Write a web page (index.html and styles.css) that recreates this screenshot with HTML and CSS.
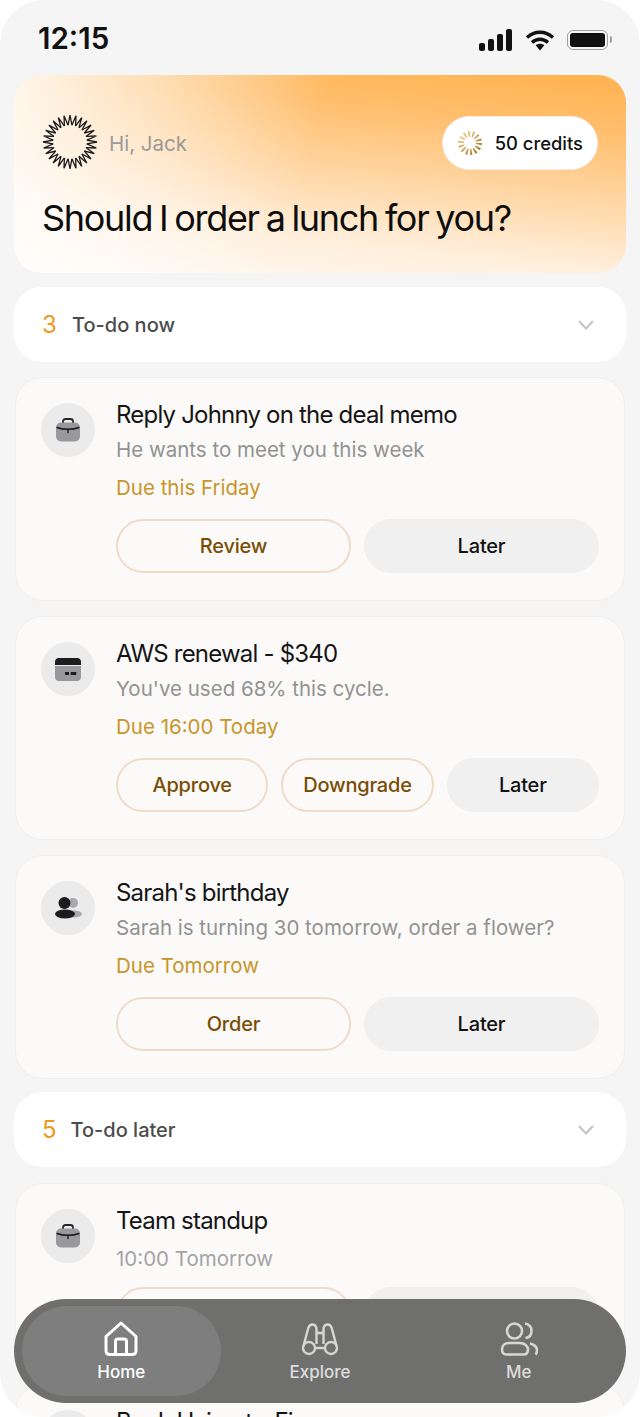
FILE: index.html
```html
<!DOCTYPE html>
<html>
    <head>
        <meta charset="utf-8">
        <title>To-do</title>
        <link rel="stylesheet" href="styles.css">
    </head>
    <body>
        <div class="phone">
            <svg width="0" height="0" class="defs">
                <defs>
                    <!-- briefcase, used twice -->
                    <symbol id="case" viewBox="0 0 24 24">
                        <path d="M7 6V3.500C7 2 8 1 9.500 1h5C16 1 17 2 17 3.500V6" fill="none" stroke="#26262a" stroke-width="1.800"/>
                        <rect x="0" y="4.500" width="24" height="19" rx="5" fill="#98989d"/>
                        <path d="M1 9.500c6 2.400 16 2.400 22 0M12 11v3.500" fill="none" stroke="#1c1c1e" stroke-width="1.400" stroke-linecap="round"/>
                    </symbol>
                </defs>
            </svg>

            <div class="status">
                <span class="time">12:15</span>
                <div class="status_icons">
                    <svg width="34" height="22" viewBox="0 0 34 22">
                        <rect x="0" y="14" width="6" height="8" rx="2"/>
                        <rect x="9" y="10" width="6" height="12" rx="2"/>
                        <rect x="18" y="5" width="6" height="17" rx="2"/>
                        <rect x="27" y="0" width="6" height="22" rx="2"/>
                    </svg>
                    <svg width="30" height="22" viewBox="0 0 30 22">
                        <path d="M2 8.500C9.500 1.500 20.500 1.500 28 8.500M7 13.500c4.800-4.300 11.200-4.300 16 0" fill="none" stroke="#111" stroke-width="3.400"/>
                        <path d="M10.700 16.200c2.500-2 6.100-2 8.600 0L15 21.500z" fill="#111"/>
                    </svg>
                    <div class="battery"><div class="battery_fill"></div></div>
                </div>
            </div>

            <div class="hero">
                <div class="hero_top">
                    <div class="greeting">
                        <svg class="logo" width="56" height="56" viewBox="-28 -28 56 56" fill="none" stroke="#1b1b1b" stroke-width="1.300">
                            <defs>
                                <path id="zig" d="M-1.900 -16.800L0 -27L1.900 -16.800"/>
                                <g id="quarter">
                                    <use href="#zig"/>
                                    <use href="#zig" transform="rotate(12.857)"/>
                                    <use href="#zig" transform="rotate(25.714)"/>
                                    <use href="#zig" transform="rotate(38.571)"/>
                                    <use href="#zig" transform="rotate(51.429)"/>
                                    <use href="#zig" transform="rotate(64.286)"/>
                                    <use href="#zig" transform="rotate(77.143)"/>
                                </g>
                            </defs>
                            <use href="#quarter"/>
                            <use href="#quarter" transform="rotate(90)"/>
                            <use href="#quarter" transform="rotate(180)"/>
                            <use href="#quarter" transform="rotate(270)"/>
                        </svg>
                        <span class="hi">Hi, Jack</span>
                    </div>
                    <div class="credits">
                        <svg width="26" height="26" viewBox="0 0 26 26">
                            <defs>
                                <linearGradient id="gold" x1="0" y1="0" x2="1" y2="1">
                                    <stop offset="0" stop-color="#f0d08a"/>
                                    <stop offset="1" stop-color="#a8741c"/>
                                </linearGradient>
                            </defs>
                            <circle cx="13" cy="13" r="9" fill="none" stroke="url(#gold)" stroke-width="6" stroke-dasharray="1.700 2.340"/>
                        </svg>
                        <span>50 credits</span>
                    </div>
                </div>
                <h1 class="question">Should I order a lunch for you?</h1>
            </div>

            <div class="section">
                <span class="count">3</span>
                <span class="section_name">To-do now</span>
                <svg class="chevron" width="18" height="12" viewBox="0 0 18 12"><path d="M2 2l7 7.500L16 2" fill="none" stroke="#c4c4c4" stroke-width="2"/></svg>
            </div>

            <div class="card">
                <div class="badge"><svg width="24" height="24"><use href="#case"/></svg></div>
                <div class="card_body">
                    <div class="title">Reply Johnny on the deal memo</div>
                    <div class="sub">He wants to meet you this week</div>
                    <div class="due">Due this Friday</div>
                    <div class="actions">
                        <div class="btn outline">Review</div>
                        <div class="btn plain">Later</div>
                    </div>
                </div>
            </div>

            <div class="card">
                <div class="badge">
                    <svg width="26" height="24" viewBox="0 0 26 24">
                        <path d="M0 8V5C0 2.500 1.500 1 4 1h18c2.500 0 4 1.500 4 4v3z" fill="#1c1c1e"/>
                        <path d="M0 9h26v11c0 2.500-1.500 4-4 4H4c-2.500 0-4-1.500-4-4z" fill="#98989d"/>
                        <rect x="10" y="15" width="4" height="3" fill="#1c1c1e"/>
                        <rect x="15.700" y="15" width="5.600" height="3" fill="#1c1c1e"/>
                    </svg>
                </div>
                <div class="card_body">
                    <div class="title">AWS renewal - $340</div>
                    <div class="sub">You've used 68% this cycle.</div>
                    <div class="due">Due 16:00 Today</div>
                    <div class="actions">
                        <div class="btn outline">Approve</div>
                        <div class="btn outline">Downgrade</div>
                        <div class="btn plain">Later</div>
                    </div>
                </div>
            </div>

            <div class="card">
                <div class="badge">
                    <svg width="30" height="28" viewBox="0 0 30 28">
                        <circle cx="20" cy="9" r="5" fill="#a9a9ad"/>
                        <ellipse cx="21" cy="20" rx="8" ry="3.500" fill="#a9a9ad"/>
                        <circle cx="11.500" cy="9" r="6" fill="#1c1c1e"/>
                        <ellipse cx="12" cy="20" rx="10" ry="4.500" fill="#1c1c1e"/>
                    </svg>
                </div>
                <div class="card_body">
                    <div class="title">Sarah's birthday</div>
                    <div class="sub">Sarah is turning 30 tomorrow, order a flower?</div>
                    <div class="due">Due Tomorrow</div>
                    <div class="actions">
                        <div class="btn outline">Order</div>
                        <div class="btn plain">Later</div>
                    </div>
                </div>
            </div>

            <div class="section later">
                <span class="count">5</span>
                <span class="section_name">To-do later</span>
                <svg class="chevron" width="18" height="12" viewBox="0 0 18 12"><path d="M2 2l7 7.500L16 2" fill="none" stroke="#c4c4c4" stroke-width="2"/></svg>
            </div>

            <div class="card short">
                <div class="badge"><svg width="24" height="24"><use href="#case"/></svg></div>
                <div class="card_body">
                    <div class="title">Team standup</div>
                    <div class="sub">10:00 Tomorrow</div>
                    <div class="actions">
                        <div class="btn outline">Join</div>
                        <div class="btn plain">Later</div>
                    </div>
                </div>
            </div>

            <div class="card">
                <div class="badge"></div>
                <div class="card_body">
                    <div class="title">Book Haircut - Fi</div>
                </div>
            </div>

            <!-- floats over the list -->
            <div class="nav">
                <div class="tab active">
                    <svg width="38" height="38" viewBox="0 0 38 38" fill="none" stroke="#fff" stroke-width="3" stroke-linejoin="round">
                        <path d="M19 3L34 16.500V30.500c0 2.500-1.500 4-4 4H8c-2.500 0-4-1.500-4-4V16.500z"/>
                        <path d="M13.500 34.500V21.500c0-1.500 1-2.500 2.500-2.500h6c1.500 0 2.500 1 2.500 2.500v13"/>
                    </svg>
                    <span>Home</span>
                </div>
                <div class="tab">
                    <svg width="38" height="38" viewBox="0 0 38 38" fill="none" stroke="#d6d6d6" stroke-width="2.400">
                        <circle cx="8" cy="28" r="6"/>
                        <circle cx="30" cy="28" r="6"/>
                        <path d="M2.500 26L7 9c.8-3 2.500-4.500 4.500-4.500S15 6 15.500 8.500V24M35.500 26L31 9c-.8-3-2.500-4.500-4.500-4.500S23 6 22.500 8.500V24"/>
                        <path d="M15.500 13h7M14 28h10"/>
                    </svg>
                    <span>Explore</span>
                </div>
                <div class="tab">
                    <svg width="38" height="38" viewBox="0 0 38 38" fill="none" stroke="#d6d6d6" stroke-width="2.600">
                        <circle cx="14.500" cy="11" r="7.500"/>
                        <path d="M9 23h11c4.500 0 8 3 8 6.500 0 3-1.500 5-4.500 5h-17c-3 0-4.500-2-4.500-5C2 26 4.500 23 9 23z"/>
                        <path d="M25 3.500c4 .5 6.500 3.500 6.500 7.500s-2.500 6.500-6 7M30 23.500c4 1 7 3.500 7 7 0 2-.5 3-1.500 4"/>
                    </svg>
                    <span>Me</span>
                </div>
            </div>
        </div>
    </body>
</html>
```

FILE: styles.css
```css
html, body {margin: 0;
            padding: 0;
            background-color: #fff;}
body       {font-family: Inter, "Liberation Sans", sans-serif;
            color: #111;}
.defs      {position: absolute;}

.phone     {position: relative;
            width: 640px;
            height: 1417px;
            box-sizing: border-box;
            padding: 0 14px;
            overflow: hidden;
            border-radius: 44px;
            background-color: #f5f5f5;}

.status    {display: flex;
            align-items: center;
            justify-content: space-between;
            height: 75px;
            padding: 0 15px 0 24px;
            box-sizing: border-box;}
.time      {font-size: 29.500px;
            font-weight: 600;
            line-height: 78px;}
.status_icons {display: flex;
            align-items: center;
            gap: 12px;
            padding-top: 4px;}
.status_icons svg {fill: #111;}
.battery   {position: relative;
            width: 35px;
            height: 14px;
            padding: 2px;
            margin-right: 3px;
            border: 1.500px solid #a0a0a0;
            border-radius: 6px;}
/* the battery's nub */
.battery:after {content: "";
            position: absolute;
            right: -4.500px;
            top: 5px;
            width: 2px;
            height: 7px;
            border-radius: 0 2px 2px 0;
            background-color: #a0a0a0;}
.battery_fill {width: 100%;
            height: 100%;
            background-color: #111;
            border-radius: 3px;}

.hero      {height: 198px;
            box-sizing: border-box;
            padding: 41px 28px 0 28px;
            border-radius: 28px;
            background:
                linear-gradient(105deg, rgba(255,255,255,.86) 0%, rgba(255,255,255,.5) 22%, rgba(255,255,255,0) 48%),
                linear-gradient(186deg, #ffb24e 0%, #ffbe6c 22%, #ffd7a6 50%, #ffeeda 74%, #fffaf5 100%);}
.hero_top  {display: flex;
            align-items: center;
            justify-content: space-between;}
.greeting  {display: flex;
            align-items: center;
            gap: 11px;}
.logo      {display: block;
            margin-top: -2px;}
.hi        {font-size: 20.500px;
            color: #9a9a9a;}
.credits   {display: flex;
            align-items: center;
            gap: 12px;
            height: 54px;
            box-sizing: border-box;
            padding: 0 14px 0 14px;
            border: 1.500px solid #f1ece4;
            border-radius: 27px;
            background-color: #fff;
            font-size: 18.400px;
            font-weight: 500;}
.question  {margin: 26px 0 0 0;
            font-size: 36px;
            font-weight: 400;
            line-height: 44px;
            letter-spacing: -1.300px;
            word-spacing: -2px;
            color: #0d0d0d;}

.section   {display: flex;
            align-items: center;
            height: 75px;
            box-sizing: border-box;
            margin-top: 14px;
            padding: 0 31px 0 28px;
            border-radius: 28px;
            background-color: #fff;}
.count     {font-size: 24px;
            color: #ec9a1e;
            width: 30px;}
.later     {margin-top: 13px;}
.later .count {width: 28.500px;}
.section_name {flex: 1;
            font-size: 20px;
            font-weight: 500;
            color: #4c4c4c;}
.chevron   {display: block;}

.card      {display: flex;
            gap: 21px;
            margin: 15px 1px 0 1px;
            padding: 23px 25px 27px 25px;
            border: 1px solid #efefef;
            border-radius: 28px;
            background-color: #fbfaf9;}
.badge     {display: flex;
            align-items: center;
            justify-content: center;
            flex: none;
            width: 54px;
            height: 54px;
            margin-top: 2px;
            border-radius: 50%;
            background-color: #ebebeb;}
.card_body {flex: 1;
            min-width: 0;}
.title     {font-size: 24px;
            line-height: 28px;
            letter-spacing: -.8px;
            color: #151515;}
.sub       {margin-top: 7px;
            font-size: 20.500px;
            line-height: 28px;
            color: #929292;}
.due       {margin-top: 10px;
            font-size: 20.500px;
            line-height: 28px;
            color: #c8952a;}
.actions   {display: grid;
            grid-auto-flow: column;
            grid-auto-columns: 1fr;
            gap: 13px;
            margin-top: 17px;}
.short     {margin-top: 16px;}
.short .sub {margin-top: 10px;
            color: #a4a4a4;}
.short .actions {margin-top: 14px;}
.btn       {display: flex;
            align-items: center;
            justify-content: center;
            height: 54px;
            box-sizing: border-box;
            border-radius: 27px;
            font-size: 20px;
            letter-spacing: -.2px;
            font-weight: 500;}
.outline   {border: 2px solid #eedcc6;
            color: #7a4d04;}
.plain     {background-color: #f0f0f0;
            color: #111;}

.nav       {position: absolute;
            left: 14px;
            right: 14px;
            top: 1299px;
            display: flex;
            height: 104px;
            box-sizing: border-box;
            padding: 7px 8px;
            border-radius: 52px;
            background-color: #6f6f6e;}
.tab       {flex: 1;
            display: flex;
            flex-direction: column;
            align-items: center;
            padding-top: 14px;
            font-size: 17px;
            font-weight: 500;
            color: #dcdcdc;}
.tab span  {margin-top: 4px;}
.active    {border-radius: 45px;
            background-color: #7e7e7e;
            color: #fff;}
```
